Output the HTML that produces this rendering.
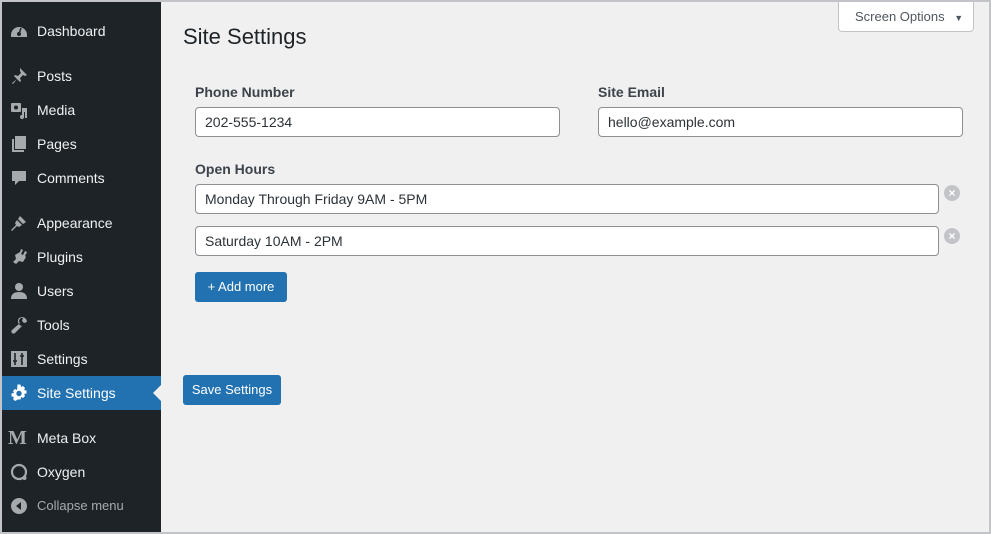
<!DOCTYPE html>
<html><head><meta charset="utf-8"><style>
*{box-sizing:border-box;margin:0;padding:0}
body{width:991px;height:534px;overflow:hidden;background:#f0f0f1;font-family:"Liberation Sans",sans-serif;position:relative;color:#1d2327}
.frame{position:absolute;inset:0;border:2px solid #c3c4c7;pointer-events:none;z-index:10}
.side{position:absolute;left:0;top:0;width:161px;height:534px;background:#1d2327}
.it{position:absolute;left:0;width:161px;height:34px;color:#f0f0f1;font-size:14px;line-height:34px;padding-left:37px}
.ic{position:absolute;left:10px;top:8px;width:18px;height:18px;fill:#a7aaad}
.act{background:#2271b1;color:#fff}
.act .ic{fill:#fff}
.act:after{content:"";position:absolute;right:0;top:9px;border:8px solid transparent;border-right-color:#f0f0f1}
h1{position:absolute;left:183px;top:24px;font-size:22px;font-weight:400;color:#1d2327}
.so{position:absolute;left:838px;top:2px;width:136px;height:30px;background:#fff;border:1px solid #c3c4c7;border-top:0;border-radius:0 0 4px 4px;font-size:13px;color:#50575e;line-height:29px;padding-left:16px}
.lb{position:absolute;font-size:14px;font-weight:700;color:#3c434a}
.in{position:absolute;height:30px;background:#fff;border:1px solid #8c8f94;border-radius:4px;font-size:14px;line-height:28px;padding-left:9px;color:#2c3338}
.x{position:absolute;width:16px;height:16px;border-radius:50%;background:#c3c4c7;color:#fff;font-size:12px;line-height:16px;text-align:center;font-weight:700}
.btn{position:absolute;background:#2271b1;color:#fff;border-radius:3px;font-size:13px;line-height:30px;text-align:center;height:30px}
</style></head><body>
<div class="side">
<div class="it" style="top:14px"><svg class="ic" viewBox="0 0 18 18"><path d="M1 13a8 8 0 0 1 16 0v2H1z"/><circle cx="9" cy="12" r="2" fill="#1d2327"/><path d="M9 12L11 6" stroke="#1d2327" stroke-width="1.5"/></svg>Dashboard</div>
<div class="it" style="top:59px"><svg class="ic" viewBox="0 0 18 18"><path d="M10 1l7 7-2 1-2-1-3 3 1 3-1 1-3-3-4 5-1-1 5-4-3-3 1-1 3 1 3-3-1-2z"/></svg>Posts</div>
<div class="it" style="top:93px"><svg class="ic" viewBox="0 0 18 18"><rect x="1" y="2" width="10" height="9" rx="1"/><circle cx="6" cy="6.5" r="2" fill="#1d2327"/><path d="M12 7h5v10h-2v-6h-1v5a2 2 0 1 1-2-2z"/></svg>Media</div>
<div class="it" style="top:127px"><svg class="ic" viewBox="0 0 18 18"><rect x="5" y="1" width="11" height="13"/><path d="M2 4h2v11h10v2H2z"/></svg>Pages</div>
<div class="it" style="top:161px"><svg class="ic" viewBox="0 0 18 18"><path d="M2 2h14v10H9l-4 4v-4H2z"/></svg>Comments</div>
<div class="it" style="top:206px"><svg class="ic" viewBox="0 0 18 18"><path d="M10 2l6 6-3 2-5-5zM7 6l5 5-3 2-2-1-5 5-1-1 5-5-1-2z"/></svg>Appearance</div>
<div class="it" style="top:240px"><svg class="ic" viewBox="0 0 18 18"><path d="M11 1l2 1-2 4 2 1 2-4 2 1-2 4 1 1-3 5-4-1-3 3-3-2 3-3-1-4 5-3z"/></svg>Plugins</div>
<div class="it" style="top:274px"><svg class="ic" viewBox="0 0 18 18"><circle cx="9" cy="5" r="4"/><path d="M1 17c0-5 3-7 8-7s8 2 8 7z"/></svg>Users</div>
<div class="it" style="top:308px"><svg class="ic" viewBox="0 0 18 18"><path d="M12 1a5 5 0 0 1 5 5l-3 1-2-2 1-3a3 3 0 0 0-3 5L2 14a2 2 0 0 0 3 3l7-7a5 5 0 0 1-3-8z"/></svg>Tools</div>
<div class="it" style="top:342px"><svg class="ic" viewBox="0 0 18 18"><rect x="1" y="1" width="16" height="16"/><path d="M5 3v12M12 3v12M3 11h4M10 6h4" stroke="#1d2327" stroke-width="1.6"/></svg>Settings</div>
<div class="it act" style="top:376px"><svg class="ic" viewBox="0 0 18 18"><path d="M7.5 0h3l.5 2.5 2-1 2 2-1 2 2.5.5v3l-2.5.5 1 2-2 2-2-1-.5 2.5h-3L7 15.5l-2 1-2-2 1-2-2.5-.5v-3L4 8.5l-1-2 2-2 2 1z" transform="translate(0 0.5)"/><circle cx="9" cy="9.5" r="2.7" fill="#2271b1"/></svg>Site Settings</div>
<div class="it" style="top:421px"><span style="position:absolute;left:8px;top:0;font-family:'Liberation Serif',serif;font-weight:700;font-size:20px;color:#a7aaad">M</span>Meta Box</div>
<div class="it" style="top:455px"><svg class="ic" viewBox="0 0 18 18"><circle cx="9" cy="9" r="7" fill="none" stroke="#a7aaad" stroke-width="2.2"/><circle cx="14.5" cy="15" r="2"/></svg>Oxygen</div>
<div class="it" style="top:489px;color:#a7aaad;font-size:13px"><svg class="ic" viewBox="0 0 18 18"><circle cx="9" cy="9" r="8"/><path d="M11 5v8L6 9z" fill="#1d2327"/></svg>Collapse menu</div>
</div>
<h1>Site Settings</h1>
<div class="so">Screen Options <span style="font-size:9px;margin-left:6px">▼</span></div>
<div class="lb" style="left:195px;top:84px">Phone Number</div>
<div class="lb" style="left:598px;top:84px">Site Email</div>
<div class="in" style="left:195px;top:107px;width:365px">202-555-1234</div>
<div class="in" style="left:598px;top:107px;width:365px">hello@example.com</div>
<div class="lb" style="left:195px;top:161px">Open Hours</div>
<div class="in" style="left:195px;top:184px;width:744px">Monday Through Friday 9AM - 5PM</div>
<div class="x" style="left:944px;top:185px">×</div>
<div class="in" style="left:195px;top:226px;width:744px">Saturday 10AM - 2PM</div>
<div class="x" style="left:944px;top:228px">×</div>
<div class="btn" style="left:195px;top:272px;width:92px">+ Add more</div>
<div class="btn" style="left:183px;top:375px;width:98px">Save Settings</div>
<div class="frame"></div>
</body></html>
